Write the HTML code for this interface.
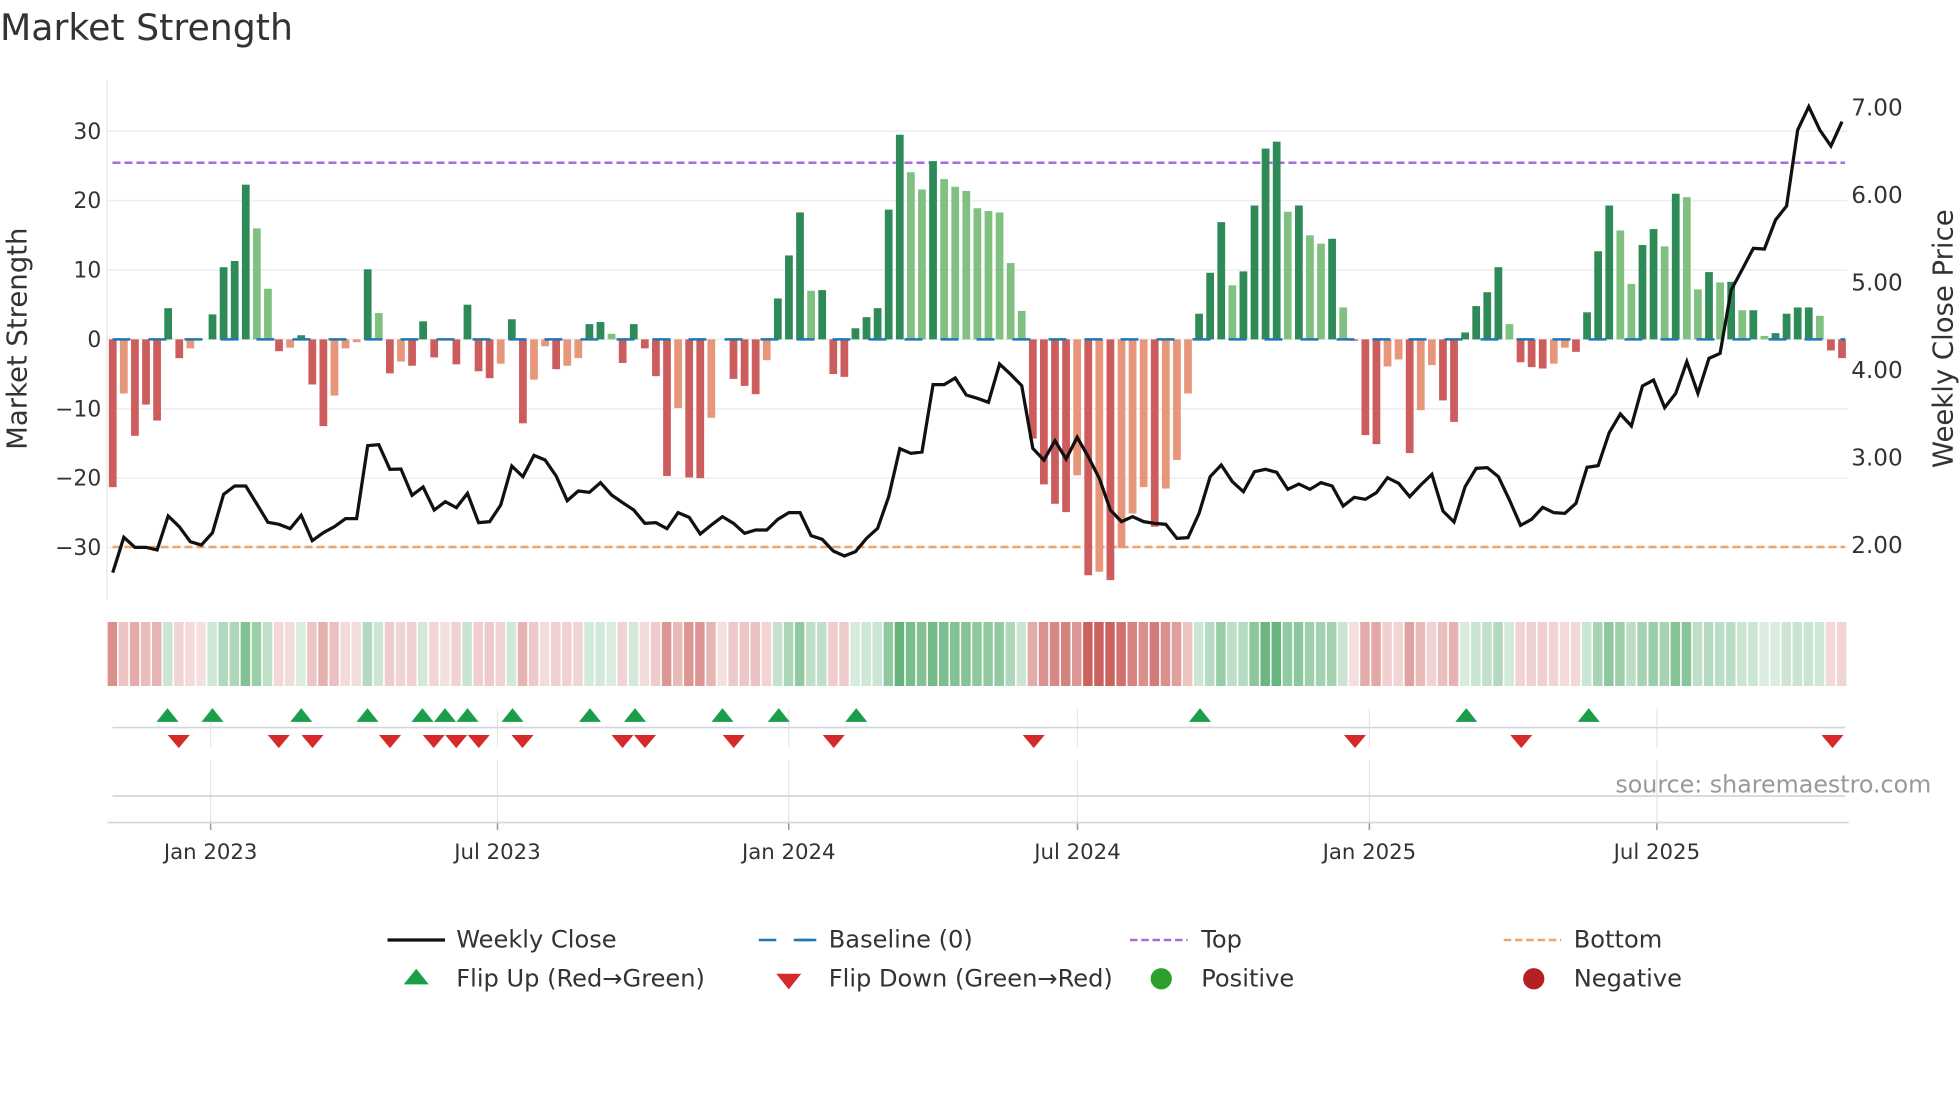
<!DOCTYPE html>
<html><head><meta charset="utf-8">
<style>
html,body{margin:0;padding:0;background:#fff;}
svg{display:block;font-family:"DejaVu Sans","Liberation Sans",sans-serif;}
</style></head>
<body>
<svg id="c" width="1960" height="1102" viewBox="0 0 1568 881.6" xmlns="http://www.w3.org/2000/svg"></svg>
<script>
var V=[-21.3,-7.8,-13.9,-9.4,-11.7,4.5,-2.7,-1.3,0,3.6,10.4,11.3,22.3,16,7.3,-1.7,-1.2,0.6,-6.5,-12.5,-8.1,-1.3,-0.4,10.1,3.8,-4.9,-3.2,-3.8,2.6,-2.6,0,-3.6,5,-4.6,-5.6,-3.5,2.9,-12.1,-5.8,-1,-4.3,-3.8,-2.7,
2.2,2.5,0.8,-3.4,2.2,-1.3,-5.3,-19.7,-9.9,-19.9,-20,-11.3,0,-5.7,-6.7,-7.9,-3,5.9,12.1,18.3,7,7.1,-5,-5.4,1.6,3.2,4.5,18.7,29.5,24.1,21.6,25.7,23.1,22,21.4,18.9,18.5,18.3,11,4.1,
-14.3,-20.9,-23.7,-24.9,-19.6,-34,-33.5,-34.7,-30.1,-25.1,-21.3,-27,-21.5,-17.4,-7.8,3.7,9.6,16.9,7.8,9.8,19.3,27.5,28.5,18.4,19.3,15,13.8,14.5,4.6,-0.2,-13.8,-15.1,-3.9,-2.9,-16.4,-10.2,-3.7,-8.8,-11.9,1,4.8,6.8,10.4,
2.2,-3.3,-4,-4.2,-3.5,-1.2,-1.8,3.9,12.7,19.3,15.7,8,13.6,15.9,13.4,21,20.5,7.2,9.7,8.2,8.3,4.2,4.2,0.5,0.9,3.7,4.6,4.6,3.4,-1.6,-2.7];
var L=[1,7,13,14,16,20,21,22,24,26,35,38,39,41,42,45,51,54,59,63,72,73,75,76,77,78,79,80,81,82,87,89,91,92,93,95,96,97,101,106,108,109,111,115,116,118,119,126,130,131,136,137,140,142,143,145,147,149,154];
var LS={};L.forEach(function(i){LS[i]=1;});
var P=[1478,1372,1402,1402,1410,1308,1340,1385,1395,1358,1243,1218,1218,1272,1327,1333,1346,1306,1382,1358,1340,1316,1316,1097,1094,1168,1167,1246,1221,1290,1265,1283,1240,1328,1325,1275,1158,1190,1126,1140,1188,1262,1233,
1237,1208,1245,1268,1290,1330,1328,1346,1298,1312,1362,1335,1310,1330,1360,1350,1350,1318,1298,1298,1367,1378,1413,1428,1415,1375,1345,1250,1106,1120,1116,914,914,894,945,955,967,852,883,917,
1105,1140,1082,1137,1072,1130,1195,1290,1325,1310,1325,1330,1333,1375,1373,1300,1190,1155,1205,1235,1175,1168,1177,1228,1212,1228,1208,1218,1278,1252,1258,1238,1193,1210,1250,1215,1183,1293,1326,1220,1165,1163,1190,
1260,1336,1318,1282,1298,1300,1270,1162,1157,1058,1002,1038,918,900,983,940,845,940,835,820,630,568,505,507,420,378,150,80,150,198,125];
function X(i){return 90.2+8.868*i;}
function Y(v){return 271.5-v*5.55;}
var s='';
s+='<text x="0" y="32" font-size="29" fill="#333">Market Strength</text>';
s+='<line x1="85.6" y1="64" x2="85.6" y2="480" stroke="#e6e6e6" stroke-width="1"/>';
[30,20,10,0,-10,-20,-30].forEach(function(v){var y=Y(v);
 s+='<line x1="86" y1="'+y+'" x2="1478" y2="'+y+'" stroke="#eceef2" stroke-width="1.2"/>';
 s+='<text x="81" y="'+(y+6)+'" font-size="17.5" fill="#333" text-anchor="end">'+(v<0?'\u2212'+(-v):v)+'</text>';});
[7,6,5,4,3,2].forEach(function(p){var y=436-(p-2)*70;
 s+='<text x="1481" y="'+(y+6.5)+'" font-size="18.5" fill="#333">'+p.toFixed(2)+'</text>';});
s+='<text transform="translate(21,271) rotate(-90)" font-size="22" fill="#333" text-anchor="middle">Market Strength</text>';
s+='<text transform="translate(1562,271) rotate(-90)" font-size="22" fill="#333" text-anchor="middle">Weekly Close Price</text>';
s+='<line x1="90" y1="130.2" x2="1476" y2="130.2" stroke="#a66be0" stroke-width="2" stroke-dasharray="6.4 3.2"/>';
s+='<line x1="90" y1="437.6" x2="1476" y2="437.6" stroke="#f0a468" stroke-width="2" stroke-dasharray="6.4 3.2"/>';
V.forEach(function(v,i){if(Math.abs(v)<0.05)return;var x=X(i)-3.1;var c;
 if(v>0)c=LS[i]?'#80c080':'#2e8b57';else c=LS[i]?'#e8967a':'#cd5c5c';
 var y0=Y(0),y1=Y(v);s+='<rect x="'+x.toFixed(2)+'" y="'+Math.min(y0,y1).toFixed(2)+'" width="6.2" height="'+Math.abs(y1-y0).toFixed(2)+'" fill="'+c+'"/>';});
s+='<line x1="90" y1="271.5" x2="1476" y2="271.5" stroke="#1f77b4" stroke-width="2" stroke-dasharray="14.4 14.4"/>';
var pts=P.map(function(z,i){return X(i).toFixed(2)+','+(64+z/3.75).toFixed(2);}).join(' ');
s+='<polyline points="'+pts+'" fill="none" stroke="#111" stroke-width="2.6" stroke-linejoin="miter"/>';
function mix(a,b,t){return 'rgb('+[0,1,2].map(function(k){return Math.round(a[k]+(b[k]-a[k])*t);}).join(',')+')';}
var prev=-1;
V.forEach(function(v,i){var sg=v>0.05?1:(v<-0.05?-1:prev);prev=sg;var t=0.18+0.72*Math.min(1,Math.abs(v)/34);
 var c=sg>0?mix([255,255,255],[62,160,90],t):mix([255,255,255],[196,80,76],t);
 s+='<rect x="'+(X(i)-4.1).toFixed(2)+'" y="497.6" width="7.6" height="51.2" fill="'+c+'"/>';});
var M=[168.5,398,631,862,1095.5,1325.5];
M.forEach(function(x){s+='<line x1="'+x+'" y1="567" x2="'+x+'" y2="598" stroke="#e6e6e6"/><line x1="'+x+'" y1="608" x2="'+x+'" y2="658" stroke="#e6e6e6"/><line x1="'+x+'" y1="658" x2="'+x+'" y2="664" stroke="#999" stroke-width="1.2"/>';});
s+='<line x1="90" y1="582" x2="1476" y2="582" stroke="#d4d6da" stroke-width="1.3"/>';
s+='<line x1="90" y1="636.8" x2="1476" y2="636.8" stroke="#d4d6da" stroke-width="1.3"/>';
s+='<line x1="86" y1="658" x2="1479" y2="658" stroke="#d4d6da" stroke-width="1.3"/>';
var U=[134,170,241,294,338,356,374,410,472,508,578,623,685,960,1173,1271];
var D=[143,223,250,312,347,365,383,418,498,516,587,667,827,1084,1217,1466];
U.forEach(function(x){s+='<polygon points="'+(x-8.8)+',577.5 '+(x+8.8)+',577.5 '+x+',566.5" fill="#1a9e48"/>';});
D.forEach(function(x){s+='<polygon points="'+(x-8.8)+',588 '+(x+8.8)+',588 '+x+',598.5" fill="#d62a2a"/>';});
['Jan 2023','Jul 2023','Jan 2024','Jul 2024','Jan 2025','Jul 2025'].forEach(function(t,k){
 s+='<text x="'+M[k]+'" y="687" font-size="17" fill="#333" text-anchor="middle">'+t+'</text>';});
s+='<text x="1545" y="634" font-size="19" fill="#999" text-anchor="end">source: sharemaestro.com</text>';
var r1=758,r2=789,fs='19.3';
s+='<line x1="310" y1="752" x2="356" y2="752" stroke="#111" stroke-width="2.6"/><text x="365" y="'+r1+'" font-size="'+fs+'" fill="#333">Weekly Close</text>';
s+='<line x1="607" y1="752" x2="653" y2="752" stroke="#1f77b4" stroke-width="2" stroke-dasharray="14 14"/><line x1="638" y1="752" x2="653" y2="752" stroke="#1f77b4" stroke-width="2"/><text x="663" y="'+r1+'" font-size="'+fs+'" fill="#333">Baseline (0)</text>';
s+='<line x1="904" y1="752" x2="950" y2="752" stroke="#a66be0" stroke-width="2" stroke-dasharray="6 3"/><text x="961" y="'+r1+'" font-size="'+fs+'" fill="#333">Top</text>';
s+='<line x1="1203" y1="752" x2="1249" y2="752" stroke="#f0a468" stroke-width="2" stroke-dasharray="6 3"/><text x="1259" y="'+r1+'" font-size="'+fs+'" fill="#333">Bottom</text>';
s+='<polygon points="323,787.5 343,787.5 333,775" fill="#1a9e48"/><text x="365" y="'+r2+'" font-size="'+fs+'" fill="#333">Flip Up (Red\u2192Green)</text>';
s+='<polygon points="621,779 641,779 631,791.5" fill="#d62a2a"/><text x="663" y="'+r2+'" font-size="'+fs+'" fill="#333">Flip Down (Green\u2192Red)</text>';
s+='<circle cx="929" cy="783" r="8.5" fill="#2ca02c"/><text x="961" y="'+r2+'" font-size="'+fs+'" fill="#333">Positive</text>';
s+='<circle cx="1227" cy="783" r="8.5" fill="#b22222"/><text x="1259" y="'+r2+'" font-size="'+fs+'" fill="#333">Negative</text>';
document.getElementById('c').innerHTML=s;
</script>
</body></html>
